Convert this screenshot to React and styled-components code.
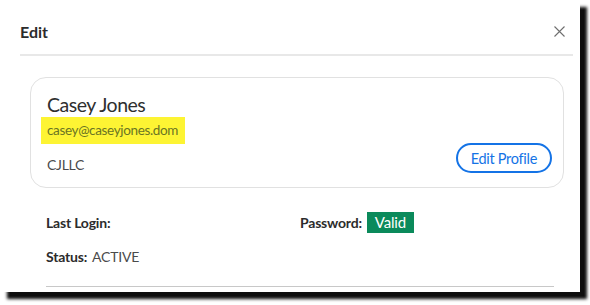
import React from "react";
import styled, { createGlobalStyle } from "styled-components";

const GlobalStyle = createGlobalStyle`
  html, body {
    margin: 0;
    padding: 0;
    background: #ffffff;
  }
  body {
    font-family: Lato, "Open Sans", sans-serif;
    color: #2c2c2c;
  }
`;

const Page = styled.div`
  width: 590px;
  height: 305px;
  overflow: hidden;
`;

const Dialog = styled.div`
  width: 580px;
  height: 292px;
  box-sizing: border-box;
  padding: 0 7px 0 20px;
  background: #ffffff;
  box-shadow: 7px 7px 3px rgba(0, 0, 0, 0.95);
`;

const Header = styled.div`
  display: flex;
  align-items: center;
  justify-content: space-between;
  height: 56px;
  padding-top: 8px;
  box-sizing: border-box;
  border-bottom: 2px solid #e8e8e8;
`;

const Title = styled.h2`
  margin: 0;
  font-size: 16px;
  font-weight: 700;
  color: #2c2c2c;
`;

const CloseButton = styled.button`
  display: flex;
  align-items: center;
  justify-content: center;
  width: 20px;
  height: 20px;
  padding: 0;
  margin-right: 4px;
  border: none;
  background: none;
  cursor: pointer;
`;

const Card = styled.div`
  display: flex;
  align-items: flex-end;
  justify-content: space-between;
  margin: 21px 9px 0 10px;
  height: 111px;
  box-sizing: border-box;
  padding: 17px 11px 14px 16px;
  border: 1px solid #e1e1e1;
  border-radius: 16px;
`;

const Identity = styled.div`
  display: flex;
  flex-direction: column;
  align-items: flex-start;
`;

const Name = styled.div`
  font-size: 19.5px;
  line-height: 24px;
  letter-spacing: -0.5px;
  color: #2f2f2f;
`;

const Email = styled.div`
  margin: 0 0 0 -6px;
  padding: 5px 7px 5px 6px;
  font-size: 13.5px;
  line-height: 17px;
  letter-spacing: -0.35px;
  background: #fdf433;
  color: #6a7524;
`;

const Company = styled.div`
  margin-top: 12px;
  font-size: 14px;
  line-height: 17px;
  letter-spacing: -0.3px;
  color: #4b4b4b;
`;

const PillButton = styled.button`
  height: 30px;
  padding: 0 13px;
  border: 2px solid #1473e6;
  border-radius: 15px;
  background: #ffffff;
  color: #1473e6;
  font-family: inherit;
  font-size: 14.5px;
  letter-spacing: -0.3px;
  cursor: pointer;
`;

const Details = styled.div`
  display: grid;
  grid-template-columns: 254px 1fr;
  row-gap: 12px;
  margin: 23px 0 0 26px;
  padding-bottom: 19px;
  width: 508px;
  border-bottom: 1px solid #c8c8c8;
`;

const Field = styled.div`
  display: flex;
  align-items: center;
  gap: 5px;
  height: 22px;
  font-size: 14px;
  letter-spacing: -0.2px;
  color: #4b4b4b;
`;

const Label = styled.span`
  font-weight: 700;
  color: #2c2c2c;
`;

const Badge = styled.span`
  display: inline-flex;
  align-items: center;
  height: 21px;
  padding: 0 8px;
  background: #0b8a5b;
  color: #ffffff;
  font-size: 15px;
`;

export default function App() {
  return (
    <Page>
      <GlobalStyle />
      <Dialog>
        <Header>
          <Title>Edit</Title>
          <CloseButton aria-label="Close">
            <svg width="11" height="11" viewBox="0 0 11 11">
              <path d="M0.5 0.5 L10.5 10.5 M10.5 0.5 L0.5 10.5" stroke="#6e6e6e" strokeWidth="1.1" fill="none" />
            </svg>
          </CloseButton>
        </Header>
        <Card>
          <Identity>
            <Name>Casey Jones</Name>
            <Email>casey@caseyjones.dom</Email>
            <Company>CJLLC</Company>
          </Identity>
          <PillButton>Edit Profile</PillButton>
        </Card>
        <Details>
          <Field>
            <Label>Last Login:</Label>
          </Field>
          <Field>
            <Label>Password:</Label>
            <Badge>Valid</Badge>
          </Field>
          <Field>
            <Label>Status:</Label>
            ACTIVE
          </Field>
        </Details>
      </Dialog>
    </Page>
  );
}
